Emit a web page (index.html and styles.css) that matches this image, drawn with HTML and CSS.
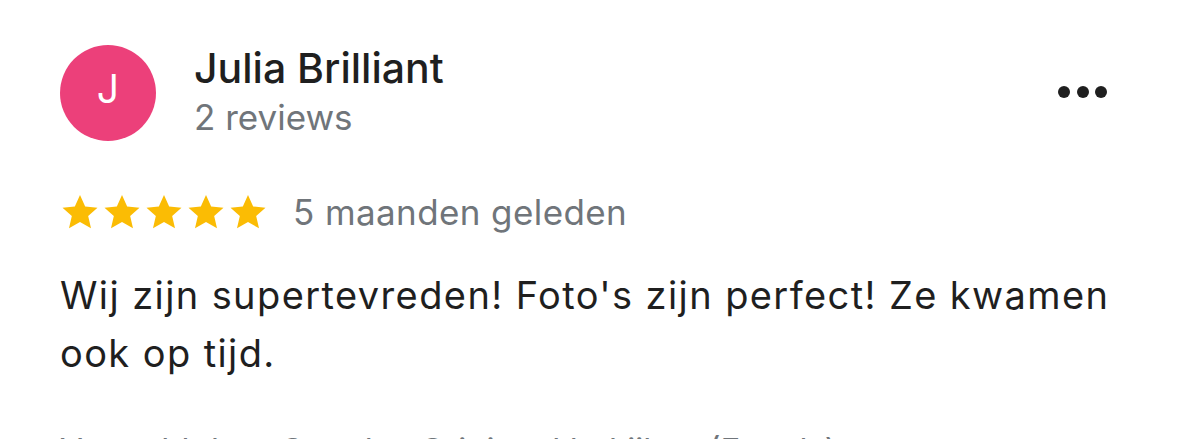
FILE: index.html
```html
<!DOCTYPE html>
<html lang="nl">
<head>
<meta charset="utf-8">
<link rel="stylesheet" href="styles.css">
</head>
<body>
<div class="review">
  <div class="header">
    <div class="avatar">J</div>
    <div class="who">
      <div class="name">Julia Brilliant</div>
      <div class="count">2 reviews</div>
    </div>
    <div class="more" aria-label="Meer">
      <span class="dot"></span><span class="dot"></span><span class="dot"></span>
    </div>
  </div>
  <div class="meta">
    <div class="stars">
      <svg viewBox="0 0 24 24" class="star"><path d="M12 1.8l3.1 6.9 7.4.7-5.6 5 1.7 7.4L12 18l-6.6 3.8 1.7-7.4-5.6-5 7.4-.7z"/></svg>
      <svg viewBox="0 0 24 24" class="star"><path d="M12 1.8l3.1 6.9 7.4.7-5.6 5 1.7 7.4L12 18l-6.6 3.8 1.7-7.4-5.6-5 7.4-.7z"/></svg>
      <svg viewBox="0 0 24 24" class="star"><path d="M12 1.8l3.1 6.9 7.4.7-5.6 5 1.7 7.4L12 18l-6.6 3.8 1.7-7.4-5.6-5 7.4-.7z"/></svg>
      <svg viewBox="0 0 24 24" class="star"><path d="M12 1.8l3.1 6.9 7.4.7-5.6 5 1.7 7.4L12 18l-6.6 3.8 1.7-7.4-5.6-5 7.4-.7z"/></svg>
      <svg viewBox="0 0 24 24" class="star"><path d="M12 1.8l3.1 6.9 7.4.7-5.6 5 1.7 7.4L12 18l-6.6 3.8 1.7-7.4-5.6-5 7.4-.7z"/></svg>
    </div>
    <span class="date">5 maanden geleden</span>
  </div>
  <p class="text">Wij zijn supertevreden! Foto's zijn perfect! Ze kwamen ook op tijd.</p>
  <p class="translated">Vertaald door Google · Origineel bekijken (Engels)</p>
</div>
</body>
</html>
```

FILE: styles.css
```css
html, body {
  margin: 0;
  padding: 0;
  background: #ffffff;
  overflow: hidden;
}
body {
  width: 1179px;
  height: 439px;
  font-family: Inter, Roboto, "Liberation Sans", sans-serif;
  color: #1f1f1f;
}
.review {
  padding: 44px 60px 0 60px;
}
.header {
  display: flex;
  align-items: flex-start;
}
.avatar {
  box-sizing: border-box;
  width: 96px;
  height: 96px;
  margin-top: 1px;
  padding-bottom: 9px;
  border-radius: 50%;
  background: #ec407a;
  color: #ffffff;
  font-size: 39px;
  display: flex;
  align-items: center;
  justify-content: center;
  flex: none;
}
.who {
  margin-left: 38px;
  flex: 1;
}
.name {
  font-size: 41px;
  font-weight: 500;
  line-height: 48px;
}
.count {
  margin-top: 3px;
  font-size: 35px;
  line-height: 44px;
  color: #70757a;
}
.more {
  display: flex;
  gap: 6.5px;
  margin-top: 42px;
  margin-right: 12px;
}
.dot {
  width: 12px;
  height: 12px;
  border-radius: 50%;
  background: #1f1f1f;
}
.meta {
  display: flex;
  align-items: flex-start;
  margin-top: 51px;
}
.stars {
  display: flex;
  gap: 2px;
}
.star {
  width: 40px;
  height: 40px;
  fill: #fbbc04;
}
.date {
  margin-left: 25px;
  font-size: 35px;
  line-height: 40px;
  letter-spacing: 0.4px;
  color: #70757a;
}
.text {
  margin: 34px 0 0;
  font-size: 38px;
  line-height: 58px;
  letter-spacing: 1.4px;
}
.translated {
  margin: 46px 0 0;
  font-size: 33px;
  line-height: 44px;
  color: #70757a;
}
```
